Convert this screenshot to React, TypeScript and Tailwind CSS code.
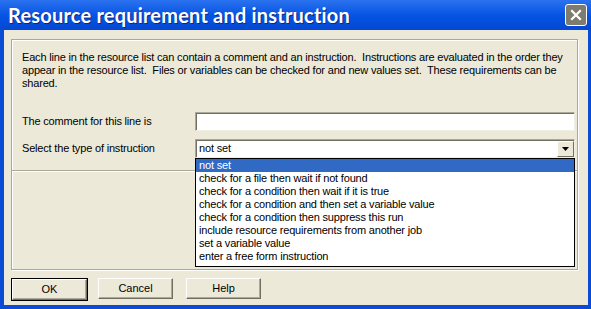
import React from 'react';

const options = [
  'not set',
  'check for a file then wait if not found',
  'check for a condition then wait if it is true',
  'check for a condition and then set a variable value',
  'check for a condition then suppress this run',
  'include resource requirements from another job',
  'set a variable value',
  'enter a free form instruction',
];

function XpButton({ label, isDefault = false }: { label: string; isDefault?: boolean }) {
  const inner = (
    <div className="w-[75px] h-[21px] bg-[#ece9d8] border border-t-white border-l-white border-r-[#716f64] border-b-[#716f64] shadow-[inset_-1px_-1px_0_#aca899] flex items-center justify-center text-[11px] text-black">
      {label}
    </div>
  );
  if (!isDefault) return inner;
  return <div className="border border-black">{inner}</div>;
}

export default function App() {
  return (
    <div className="w-[591px] h-[309px] bg-[#0a4cd6] flex flex-col font-['Liberation_Sans',Arial,sans-serif] overflow-hidden">
      {/* title bar */}
      <div className="h-[30px] flex items-center justify-between pl-[8px] pr-[4px] bg-gradient-to-b from-[#2a72ef] via-[#0554e4] to-[#0448d2]">
        <span className="font-['Lato',sans-serif] font-bold text-[20px] text-white [text-shadow:1px_1px_0_#0a2a8a] tracking-[0.2px]">
          Resource requirement and instruction
        </span>
        <div className="w-[22px] h-[22px] rounded-[3px] border border-white bg-[#7e7c6f] flex items-center justify-center">
          <svg width="12" height="12" viewBox="0 0 12 12">
            <path d="M2 2 L10 10 M10 2 L2 10" stroke="white" strokeWidth="2.2" strokeLinecap="square" />
          </svg>
        </div>
      </div>

      {/* client area */}
      <div className="flex-1 ml-[4px] mr-[3px] mb-[4px] bg-[#ece9d8] flex flex-col pt-[9px] pl-[7px] pr-[10px]">
        <div className="h-[231px] border border-[#aca899] shadow-[inset_1px_1px_0_#fff,1px_1px_0_#fff] flex flex-col">
          <div className="h-[130px] flex flex-col pl-[10px] pr-[2px] pt-[11px] text-[11px] text-black tracking-[-0.18px]">
            <p className="leading-[13px] whitespace-pre">
              {'Each line in the resource list can contain a comment and an instruction.  Instructions are evaluated in the order they\nappear in the resource list.  Files or variables can be checked for and new values set.  These requirements can be\nshared.'}
            </p>

            <div className="flex items-center mt-[22px]">
              <span className="w-[173px]">The comment for this line is</span>
              <div className="flex-1 h-[19px] bg-white border border-t-[#aca899] border-l-[#aca899] border-r-[#f1efe2] border-b-[#f1efe2] shadow-[inset_1px_1px_0_#716f64]" />
            </div>

            <div className="flex items-center mt-[8px]">
              <span className="w-[173px]">Select the type of instruction</span>
              <div className="relative flex-1">
                <div className="h-[19px] bg-white border border-t-[#aca899] border-l-[#aca899] border-r-[#f1efe2] border-b-[#f1efe2] shadow-[inset_1px_1px_0_#716f64] flex items-center pl-[3px]">
                  <span className="flex-1">not set</span>
                  <div className="w-[17px] h-[16px] bg-[#ece9d8] border border-t-white border-l-white border-r-[#716f64] border-b-[#716f64] flex items-center justify-center">
                    <svg width="7" height="4" viewBox="0 0 7 4">
                      <path d="M0 0 H7 L3.5 4 Z" fill="black" />
                    </svg>
                  </div>
                </div>

                {/* open dropdown list */}
                <div className="absolute top-full left-0 w-[380px] bg-white border border-black z-10 flex flex-col pb-[3px]">
                  {options.map((o, i) => (
                    <div
                      key={o}
                      className={
                        i === 0
                          ? 'h-[13px] leading-[13px] pl-[3px] bg-[#316ac5] text-white whitespace-nowrap'
                          : 'h-[13px] leading-[13px] pl-[3px] text-black whitespace-nowrap'
                      }
                    >
                      {o}
                    </div>
                  ))}
                </div>
              </div>
            </div>
          </div>
          <div className="h-[2px] border-t border-[#aca899] border-b border-b-white" />
          <div className="flex-1" />
        </div>

        <div className="flex items-start mt-[8px]">
          <XpButton label="OK" isDefault />
          <div className="ml-[10px]">
            <XpButton label="Cancel" />
          </div>
          <div className="ml-[13px]">
            <XpButton label="Help" />
          </div>
        </div>
      </div>
    </div>
  );
}
